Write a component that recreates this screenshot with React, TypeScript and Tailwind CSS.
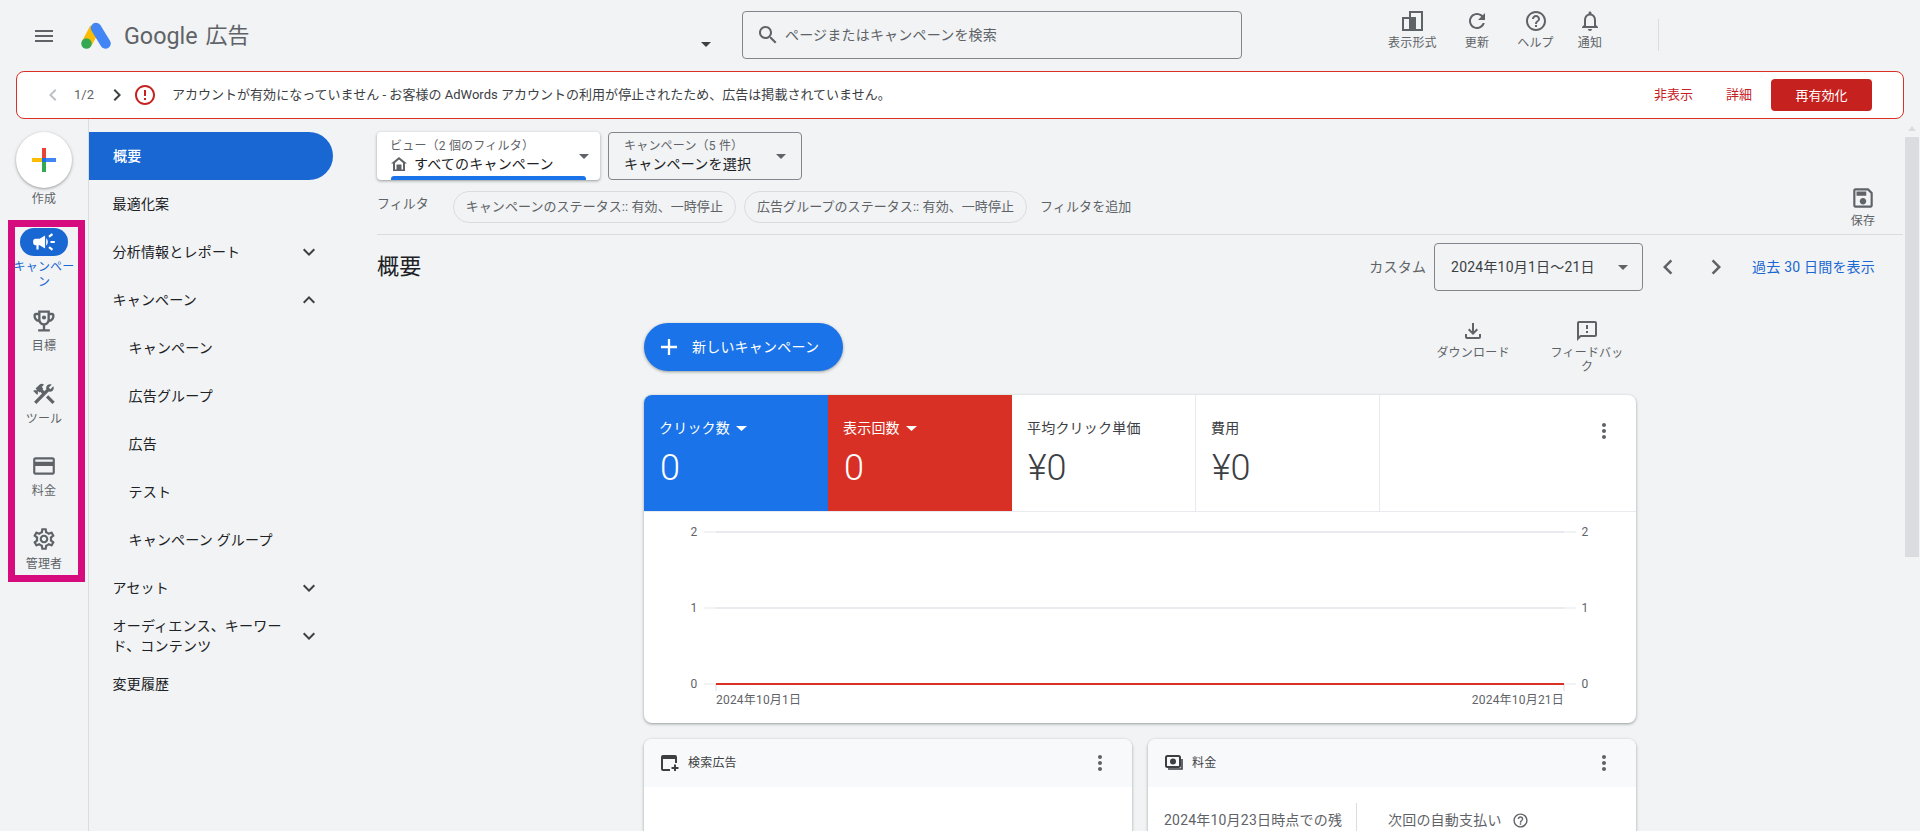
import React from "react";

const P: Record<string, string> = {
  menu: "M3 18h18v-2H3v2zm0-5h18v-2H3v2zm0-7v2h18V6H3z",
  search: "M15.5 14h-.79l-.28-.27C15.41 12.59 16 11.11 16 9.5 16 5.91 13.09 3 9.5 3S3 5.91 3 9.5 5.91 16 9.5 16c1.61 0 3.09-.59 4.23-1.57l.27.28v.79l5 4.99L20.49 19l-4.99-5zm-6 0C7.01 14 5 11.99 5 9.5S7.01 5 9.5 5 14 7.01 14 9.5 11.99 14 9.5 14z",
  refresh: "M17.65 6.35C16.2 4.9 14.21 4 12 4c-4.42 0-7.99 3.58-7.99 8s3.57 8 7.99 8c3.73 0 6.84-2.55 7.73-6h-2.08c-.82 2.33-3.04 4-5.65 4-3.31 0-6-2.69-6-6s2.69-6 6-6c1.66 0 3.14.69 4.22 1.78L13 11h7V4l-2.35 2.35z",
  help: "M11 18h2v-2h-2v2zm1-16C6.48 2 2 6.48 2 12s4.48 10 10 10 10-4.48 10-10S17.52 2 12 2zm0 18c-4.41 0-8-3.59-8-8s3.59-8 8-8 8 3.59 8 8-3.59 8-8 8zm0-14c-2.21 0-4 1.79-4 4h2c0-1.1.9-2 2-2s2 .9 2 2c0 2-3 1.75-3 5h2c0-2.25 3-2.5 3-5 0-2.21-1.79-4-4-4z",
  bell: "M12 22c1.1 0 2-.9 2-2h-4c0 1.1.9 2 2 2zm6-6v-5c0-3.07-1.63-5.64-4.5-6.32V4c0-.83-.67-1.5-1.5-1.5s-1.5.67-1.5 1.5v.68C7.64 5.36 6 7.92 6 11v5l-2 2v1h16v-1l-2-2zm-2 1H8v-6c0-2.48 1.51-4.5 4-4.5s4 2.02 4 4.5v6z",
  error: "M11 15h2v2h-2zm0-8h2v6h-2zm.99-5C6.47 2 2 6.48 2 12s4.47 10 9.99 10C17.52 22 22 17.52 22 12S17.52 2 11.99 2zM12 20c-4.42 0-8-3.58-8-8s3.58-8 8-8 8 3.58 8 8-3.58 8-8 8z",
  left: "M15.41 7.41L14 6l-6 6 6 6 1.41-1.41L10.83 12z",
  right: "M10 6L8.59 7.41 13.17 12l-4.58 4.59L10 18l6-6z",
  down: "M16.59 8.59L12 13.17 7.41 8.59 6 10l6 6 6-6z",
  up: "M12 8l-6 6 1.41 1.41L12 10.83l4.59 4.58L18 14z",
  campaign: "M18 11v2h4v-2h-4zm-2 6.61c.96.71 2.21 1.65 3.2 2.39.4-.53.8-1.07 1.2-1.6-.99-.74-2.24-1.68-3.2-2.4-.4.54-.8 1.08-1.2 1.61zM20.4 5.6c-.4-.53-.8-1.07-1.2-1.6-.99.74-2.24 1.68-3.2 2.4.4.53.8 1.07 1.2 1.6.96-.72 2.21-1.65 3.2-2.4zM4 9c-1.1 0-2 .9-2 2v2c0 1.1.9 2 2 2h1v4h2v-4h1l5 3V6L8 9H4zm11.5 3c0-1.33-.58-2.53-1.5-3.35v6.69c.92-.81 1.5-2.01 1.5-3.34z",
  trophy: "M19 5h-2V3H7v2H5c-1.1 0-2 .9-2 2v1c0 2.55 1.92 4.63 4.39 4.94.63 1.5 1.98 2.63 3.61 2.96V19H7v2h10v-2h-4v-3.1c1.63-.33 2.98-1.46 3.61-2.96C19.08 12.63 21 10.55 21 8V7c0-1.1-.9-2-2-2zM5 8V7h2v3.82C5.84 10.4 5 9.3 5 8zm7 6c-1.65 0-3-1.35-3-3V5h6v6c0 1.65-1.35 3-3 3zm7-6c0 1.3-.84 2.4-2 2.82V7h2v1zM12 7.2a1.8 1.8 0 1 0 0 3.6 1.8 1.8 0 0 0 0-3.6z",
  tools: "M13.783 15.172l2.121-2.121 5.996 5.996-2.121 2.121zM17.5 10c1.93 0 3.5-1.57 3.5-3.5 0-.58-.16-1.12-.41-1.6l-2.7 2.7-1.49-1.49 2.7-2.7c-.48-.25-1.02-.41-1.6-.41C15.57 3 14 4.57 14 6.5c0 .41.08.8.21 1.16l-1.85 1.85-1.78-1.78.71-.71-1.41-1.41L12 3.49c-1.17-1.17-3.07-1.17-4.24 0L4.22 7.03l1.41 1.41H2.81l-.71.71 3.54 3.54.71-.71V9.15l1.41 1.41.71-.71 1.78 1.78-7.41 7.41 2.12 2.12L16.34 9.79c.36.13.75.21 1.16.21z",
  card: "M20 4H4c-1.11 0-1.99.89-1.99 2L2 18c0 1.11.89 2 2 2h16c1.11 0 2-.89 2-2V6c0-1.11-.89-2-2-2zm0 14H4v-6h16v6zm0-10H4V6h16v2z",
  gear: "M19.43 12.98c.04-.32.07-.64.07-.98 0-.34-.03-.66-.07-.98l2.11-1.65c.19-.15.24-.42.12-.64l-2-3.46c-.09-.16-.26-.25-.44-.25-.06 0-.12.01-.17.03l-2.49 1c-.52-.4-1.08-.73-1.69-.98l-.38-2.65C14.46 2.18 14.25 2 14 2h-4c-.25 0-.46.18-.49.42l-.38 2.65c-.61.25-1.17.59-1.69.98l-2.49-1c-.06-.02-.12-.03-.18-.03-.17 0-.34.09-.43.25l-2 3.46c-.13.22-.07.49.12.64l2.11 1.65c-.04.32-.07.65-.07.98 0 .33.03.66.07.98l-2.11 1.65c-.19.15-.24.42-.12.64l2 3.46c.09.16.26.25.44.25.06 0 .12-.01.17-.03l2.49-1c.52.4 1.08.73 1.69.98l.38 2.65c.03.24.24.42.49.42h4c.25 0 .46-.18.49-.42l.38-2.65c.61-.25 1.17-.59 1.69-.98l2.49 1c.06.02.12.03.18.03.17 0 .34-.09.43-.25l2-3.46c.12-.22.07-.49-.12-.64l-2.11-1.65zm-1.98-1.71c.04.31.05.52.05.73 0 .21-.02.43-.05.73l-.14 1.13.89.7 1.08.84-.7 1.21-1.27-.51-1.04-.42-.9.68c-.43.32-.84.56-1.25.73l-1.06.43-.16 1.13-.2 1.35h-1.4l-.19-1.35-.16-1.13-1.06-.43c-.43-.18-.83-.41-1.23-.71l-.91-.7-1.06.43-1.27.51-.7-1.21 1.08-.84.89-.7-.14-1.13c-.03-.31-.05-.54-.05-.74s.02-.43.05-.73l.14-1.13-.89-.7-1.08-.84.7-1.21 1.27.51 1.04.42.9-.68c.43-.32.84-.56 1.25-.73l1.06-.43.16-1.13.2-1.35h1.39l.19 1.35.16 1.13 1.06.43c.43.18.83.41 1.23.71l.91.7 1.06-.43 1.27-.51.7 1.21-1.07.85-.89.7.14 1.13zM12 8c-2.21 0-4 1.79-4 4s1.79 4 4 4 4-1.79 4-4-1.79-4-4-4zm0 6c-1.1 0-2-.9-2-2s.9-2 2-2 2 .9 2 2-.9 2-2 2z",
  save: "M17 3H5c-1.11 0-2 .9-2 2v14c0 1.1.89 2 2 2h14c1.1 0 2-.9 2-2V7l-4-4zm2 16H5V5h11.17L19 7.83V19zm-7-7c-1.66 0-3 1.34-3 3s1.34 3 3 3 3-1.34 3-3-1.34-3-3-3zM6 6h9v4H6z",
  download: "M18 15v3H6v-3H4v3c0 1.1.9 2 2 2h12c1.1 0 2-.9 2-2v-3h-2zm-1-4l-1.41-1.41L13 12.17V4h-2v8.17L8.41 9.59 7 11l5 5 5-5z",
  feedback: "M20 2H4c-1.1 0-1.99.9-1.99 2L2 22l4-4h14c1.1 0 2-.9 2-2V4c0-1.1-.9-2-2-2zm0 14H5.17L4 17.17V4h16v12zm-9-4h2v2h-2zm0-6h2v4h-2z",
  more: "M12 8c1.1 0 2-.9 2-2s-.9-2-2-2-2 .9-2 2 .9 2 2 2zm0 2c-1.1 0-2 .9-2 2s.9 2 2 2 2-.9 2-2-.9-2-2-2zm0 6c-1.1 0-2 .9-2 2s.9 2 2 2 2-.9 2-2-.9-2-2-2z",
};

function I({ n, c = "text-[#5f6368]", s = 24 }: { n: string; c?: string; s?: number }) {
  return (
    <svg width={s} height={s} viewBox="0 0 24 24" className={`shrink-0 fill-current ${c}`}>
      <path d={P[n]} />
    </svg>
  );
}

function Tri({ c = "fill-[#5f6368]", w = 10, h = 5 }: { c?: string; w?: number; h?: number }) {
  return (
    <svg width={w} height={h} viewBox="0 0 10 5" className={`shrink-0 ${c}`} preserveAspectRatio="none">
      <path d="M0 0h10L5 5z" />
    </svg>
  );
}

function TopAction({ icon, custom, label, cls = "" }: { icon?: string; custom?: React.ReactNode; label: string; cls?: string }) {
  return (
    <div className={`flex flex-col items-center ${cls}`}>
      <div className="h-[24px] flex items-center justify-center">{custom ?? <I n={icon as string} />}</div>
      <div className="mt-[2px] text-[12px] leading-[16px] text-[#5f6368] whitespace-nowrap">{label}</div>
    </div>
  );
}

function RailItem({ icon, label, cls }: { icon: string; label: string; cls: string }) {
  return (
    <div className={`flex flex-col items-center ${cls}`}>
      <div className="h-[24px] flex items-center justify-center">
        <I n={icon} s={icon === "trophy" ? 28 : 26} />
      </div>
      <div className="mt-[5px] text-[12px] leading-[16px] text-[#5f6368] whitespace-nowrap">{label}</div>
    </div>
  );
}

function NavItem({ label, chev, child, two }: { label: string; chev?: "up" | "down"; child?: boolean; two?: boolean }) {
  return (
    <div className={`h-[48px] flex items-center pr-[12px] text-[14px] leading-[20px] text-[#202124] ${child ? "pl-[39.5px]" : "pl-[23.5px]"}`}>
      <div className={two ? "w-[178px]" : "whitespace-nowrap"}>{label}</div>
      {chev && (
        <div className="ml-auto">
          <I n={chev} c="text-[#3c4043]" />
        </div>
      )}
    </div>
  );
}

function Metric({ label, value, tone, tri }: { label: string; value: string; tone: string; tri?: boolean }) {
  return (
    <div className={`w-[184px] h-[116px] pl-[15px] pt-[23px] ${tone}`}>
      <div className="flex items-center gap-[6px] text-[14px] leading-[20px] whitespace-nowrap">
        {label}
        {tri && <Tri c="fill-white" w={11} h={5} />}
      </div>
      <div className="ml-[1px] mt-[10px] text-[36px] leading-[40px] font-light tracking-normal">{value}</div>
    </div>
  );
}

function Chart() {
  const t = "fill-[#5f6368] text-[12px]";
  return (
    <svg width={992} height={212} viewBox="0 0 992 212" className="block">
      {[20, 96, 172].map((y) => (
        <g key={y}>
          <line x1={60} x2={932} y1={y} y2={y} stroke="#f1f3f4" strokeWidth={2} />
          <line x1={72} x2={920} y1={y} y2={y} stroke="#e8eaed" strokeWidth={2} />
        </g>
      ))}
      <line x1={72} x2={72} y1={172} y2={179} stroke="#dadce0" />
      <line x1={920} x2={920} y1={172} y2={179} stroke="#dadce0" />
      <line x1={72} x2={920} y1={172} y2={172} stroke="#d93025" strokeWidth={2} />
      {[
        ["2", 20],
        ["1", 96],
        ["0", 172],
      ].map(([v, y]) => (
        <g key={v as string}>
          <text x={50} y={(y as number) + 4} textAnchor="middle" className={t}>{v}</text>
          <text x={941} y={(y as number) + 4} textAnchor="middle" className={t}>{v}</text>
        </g>
      ))}
      <text x={72} y={192} className={t}>2024年10月1日</text>
      <text x={920} y={192} textAnchor="end" className={t}>2024年10月21日</text>
    </svg>
  );
}

const cardShadow = "shadow-[0_1px_2px_rgba(60,64,67,0.3),0_1px_3px_1px_rgba(60,64,67,0.15)]";

export default function App() {
  return (
    <div className="h-[831px] w-[1920px] overflow-hidden flex flex-col bg-[#f1f3f4] tracking-[0.2px] font-['Roboto','Noto_Sans_CJK_JP',sans-serif] text-[#3c4043]">
      {/* Header */}
      <header className="h-[71px] shrink-0 flex items-start">
        <div className="w-[701px] shrink-0 flex items-center h-[71px] pl-[32px] tracking-normal">
          <I n="menu" />
          <svg width={30} height={27} viewBox="0 0 30 27" className="ml-[25px]">
            <line x1={14} y1={6} x2={6} y2={21} stroke="#fbbc04" strokeWidth={10.5} />
            <line x1={15} y1={6} x2={24.5} y2={21.5} stroke="#4285f4" strokeWidth={10.5} strokeLinecap="round" />
            <circle cx={5.5} cy={21.5} r={5.25} fill="#34a853" />
          </svg>
          <span className="ml-[13px] text-[23.3px] leading-[32px] text-[#5f6368]">Google</span>
          <span className="ml-[8px] text-[22px] leading-[32px] text-[#5f6368]">広告</span>
        </div>
        <div className="mt-[42px]">
          <Tri c="fill-[#3c4043]" />
        </div>
        <div className="ml-[31px] mt-[11px] w-[500px] h-[48px] shrink-0 border border-[#80868b] rounded-[4px] flex items-center pl-[13px]">
          <I n="search" s={24} />
          <span className="ml-[5px] text-[14px] leading-[20px] text-[#5f6368]">ページまたはキャンペーンを検索</span>
        </div>
        <div className="ml-[146px] mt-[9px] flex">
          <TopAction
            label="表示形式"
            custom={
              <svg width={21} height={20} viewBox="0 0 21 20" className="fill-[#5f6368]">
                <path d="M7 0h14v20H0V6h7V0zm2 2v4h-2v12h12V2H9zM2 8v10h5V8H2z" />
                <path d="M7 6h7v14H7z" />
              </svg>
            }
          />
          <TopAction icon="refresh" label="更新" cls="ml-[28px]" />
          <TopAction icon="help" label="ヘルプ" cls="ml-[28px]" />
          <TopAction icon="bell" label="通知" cls="ml-[24px]" />
        </div>
        <div className="ml-[56px] mt-[19px] w-px h-[32px] bg-[#dadce0]" />
      </header>

      {/* Banner */}
      <div className="mx-[16px] h-[48px] shrink-0 bg-white border border-[#d93025] rounded-[8px] flex items-center pl-[24px] pr-[31px] tracking-normal">
        <I n="left" c="text-[#bdc1c6]" />
        <span className="ml-[9px] text-[13px] leading-[20px] text-[#5f6368]">1/2</span>
        <div className="ml-[11px]"><I n="right" c="text-[#3c4043]" /></div>
        <div className="ml-[4px]"><I n="error" c="text-[#c5221f]" /></div>
        <span className="ml-[15px] text-[13px] leading-[20px] text-[#3c4043] whitespace-nowrap tracking-[0.02px]">
          アカウントが有効になっていません - お客様の AdWords アカウントの利用が停止されたため、広告は掲載されていません。
        </span>
        <span className="ml-auto text-[13px] leading-[20px] text-[#c5221f]">非表示</span>
        <span className="ml-[33px] text-[13px] leading-[20px] text-[#c5221f]">詳細</span>
        <button className="ml-[19px] w-[101px] h-[32px] bg-[#c5221f] rounded-[4px] text-white text-[13px] leading-[20px] pt-[1px]">再有効化</button>
      </div>

      {/* Body */}
      <div className="flex-1 min-h-0 flex">
        {/* Rail */}
        <aside className="relative w-[89px] shrink-0 border-r border-[#dadce0] flex flex-col items-center pt-[13px]">
          <div className={`w-[56px] h-[56px] rounded-full bg-white flex items-center justify-center ${cardShadow}`}>
            <svg width={24} height={24} viewBox="0 0 24 24">
              <rect x={10} y={0} width={4} height={12} fill="#ea4335" />
              <rect x={10} y={12} width={4} height={12} fill="#34a853" />
              <rect x={0} y={10} width={10} height={4} fill="#fbbc04" />
              <rect x={14} y={10} width={10} height={4} fill="#4285f4" />
              <rect x={10} y={10} width={4} height={4} fill="#1a73e8" />
            </svg>
          </div>
          <div className="mt-[3px] text-[12px] leading-[16px] text-[#5f6368]">作成</div>
          <div className="mt-[21px] w-[48px] h-[28px] rounded-full bg-[#1967d2] flex items-center justify-center">
            <I n="campaign" c="text-white" s={26} />
          </div>
          <div className="mt-[4px] w-[64px] text-center text-[12px] leading-[15px] text-[#1967d2]">キャンペーン</div>
          <RailItem icon="trophy" label="目標" cls="mt-[19px]" />
          <RailItem icon="tools" label="ツール" cls="mt-[28px]" />
          <RailItem icon="card" label="料金" cls="mt-[27px]" />
          <RailItem icon="gear" label="管理者" cls="mt-[28px]" />
          <div className="absolute left-[8px] top-[101px] w-[77px] h-[362px] border-[7px] border-[#d60b7e]" />
        </aside>

        {/* Nav */}
        <nav className="w-[244px] shrink-0 pt-[13px]">
          <div className="h-[48px] bg-[#1967d2] rounded-r-full flex items-center pl-[24px] text-[14px] leading-[20px] text-white font-medium">概要</div>
          <NavItem label="最適化案" />
          <NavItem label="分析情報とレポート" chev="down" />
          <NavItem label="キャンペーン" chev="up" />
          <NavItem label="キャンペーン" child />
          <NavItem label="広告グループ" child />
          <NavItem label="広告" child />
          <NavItem label="テスト" child />
          <NavItem label="キャンペーン グループ" child />
          <NavItem label="アセット" chev="down" />
          <NavItem label="オーディエンス、キーワード、コンテンツ" chev="down" two />
          <NavItem label="変更履歴" />
        </nav>

        {/* Main */}
        <main className="flex-1 min-w-0 overflow-hidden pl-[44px] pt-[13px]">
          <div className="flex gap-[8px]">
            <div className={`w-[223px] h-[48px] bg-white rounded-[4px] flex items-center ${cardShadow}`}>
              <div className="flex-1 min-w-0 pl-[13px] pt-[6px] self-start">
                <div className="text-[12px] leading-[16px] text-[#5f6368] whitespace-nowrap">ビュー（2 個のフィルタ）</div>
                <div className="flex items-center text-[14px] leading-[20px] text-[#202124] whitespace-nowrap">
                  <svg width={16} height={14} viewBox="0 0 16 14" className="ml-[1px] mr-[7px] shrink-0 fill-[#5f6368]">
                    <path fillRule="evenodd" d="M8 0L0 6.5h2V14h12V6.5h2L8 0zM8 2.5l4 3.6v6.4H4V6.1l4-3.6z" />
                    <path d="M5.5 7.5h5V14h-5z" />
                  </svg>
                  すべてのキャンペーン
                </div>
                <div className="mt-[2px] ml-[1px] w-[195px] h-[4px] bg-[#1a73e8] rounded-t-[3px]" />
              </div>
              <div className="mr-[11px]"><Tri /></div>
            </div>
            <div className="w-[194px] h-[48px] border border-[#80868b] rounded-[4px] flex items-center">
              <div className="flex-1 pl-[15px] self-start pt-[5px]">
                <div className="text-[12px] leading-[16px] text-[#5f6368]">キャンペーン（5 件）</div>
                <div className="text-[14px] leading-[20px] text-[#202124]">キャンペーンを選択</div>
              </div>
              <div className="mr-[15px]"><Tri /></div>
            </div>
          </div>

          <div className="h-[55px] border-b border-[#dadce0] flex items-center pr-[27px]">
            <span className="text-[13px] leading-[20px] tracking-normal text-[#5f6368] -mt-[7px]">フィルタ</span>
            <div className="ml-[24px] h-[32px] px-[12px] rounded-full border border-[#dadce0] flex items-center text-[13px] tracking-[0.06px] text-[#5f6368] whitespace-nowrap">キャンペーンのステータス:: 有効、一時停止</div>
            <div className="ml-[8px] h-[32px] px-[12px] rounded-full border border-[#dadce0] flex items-center text-[13px] tracking-[0.06px] text-[#5f6368] whitespace-nowrap">広告グループのステータス:: 有効、一時停止</div>
            <span className="ml-[13px] text-[13px] leading-[20px] tracking-[0.1px] text-[#5f6368]">フィルタを追加</span>
            <div className="ml-auto flex flex-col items-center">
              <I n="save" s={26} />
              <span className="mt-[2px] text-[12px] leading-[16px] text-[#5f6368]">保存</span>
            </div>
          </div>

          <div className="mt-[8px] h-[48px] flex items-center pr-[28px]">
            <h1 className="text-[22px] leading-[28px] font-normal text-[#202124]">概要</h1>
            <span className="ml-auto text-[14px] text-[#5f6368]">カスタム</span>
            <div className="ml-[8px] w-[209px] h-[48px] border border-[#80868b] rounded-[4px] flex items-center pl-[16px] pr-[14px] text-[14px] text-[#3c4043] whitespace-nowrap">
              2024年10月1日～21日
              <div className="ml-auto"><Tri /></div>
            </div>
            <div className="ml-[10px]"><I n="left" s={30} /></div>
            <div className="ml-[18px]"><I n="right" s={30} /></div>
            <span className="ml-[21px] text-[14px] text-[#1967d2] whitespace-nowrap">過去 30 日間を表示</span>
          </div>

          <div className="ml-[267px] w-[992px] mt-[32px]">
            <div className="h-[72px] flex items-start">
              <button className={`w-[199px] h-[48px] rounded-full bg-[#1a73e8] flex items-center pl-[13px] text-white text-[14px] leading-[20px] ${cardShadow}`}>
                <svg width={24} height={24} viewBox="0 0 24 24" className="fill-white"><path d="M19 13h-6v6h-2v-6H5v-2h6V5h2v6h6v2z" transform="translate(12 12) scale(1.15) translate(-12 -12)" /></svg>
                <span className="ml-[11px]">新しいキャンペーン</span>
              </button>
              <div className="ml-auto -mt-[4px] flex gap-[34px] pr-[9px]">
                <div className="w-[80px] flex flex-col items-center text-center">
                  <I n="download" />
                  <div className="mt-[3px] text-[12px] leading-[14px] text-[#5f6368]">ダウンロード</div>
                </div>
                <div className="w-[80px] flex flex-col items-center text-center">
                  <I n="feedback" />
                  <div className="mt-[3px] w-[76px] text-[12px] leading-[14px] text-[#5f6368]">フィードバック</div>
                </div>
              </div>
            </div>

            <section className={`w-[992px] h-[328px] bg-white rounded-[8px] overflow-hidden ${cardShadow}`}>
              <div className="flex border-b border-[#e8eaed]">
                <Metric label="クリック数" value="0" tone="bg-[#1a73e8] text-white" tri />
                <Metric label="表示回数" value="0" tone="bg-[#d93025] text-white" tri />
                <Metric label="平均クリック単価" value="¥0" tone="border-r border-[#e8eaed] text-[#3c4043]" />
                <Metric label="費用" value="¥0" tone="border-r border-[#e8eaed] text-[#3c4043]" />
                <div className="ml-auto pr-[20px] pt-[24px]"><I n="more" /></div>
              </div>
              <Chart />
            </section>

            <div className="mt-[16px] flex gap-[16px]">
              <section className={`flex-1 h-[200px] bg-white rounded-t-[8px] overflow-hidden ${cardShadow}`}>
                <div className="h-[48px] bg-[#f8f9fa] flex items-center pl-[17px] pr-[20px] text-[12px] text-[#3c4043]">
                  <svg width={18} height={16} viewBox="0 0 18 16" className="fill-[#3c4043]">
                    <path d="M2 0h12a2 2 0 0 1 2 2v6h-2V4H2v10h7v2H2a2 2 0 0 1-2-2V2a2 2 0 0 1 2-2z" />
                    <path d="M13 9.5h2V12h2.5v2H15v2h-2v-2h-2.5v-2H13z" />
                  </svg>
                  <span className="ml-[9px]">検索広告</span>
                  <div className="ml-auto"><I n="more" /></div>
                </div>
              </section>
              <section className={`flex-1 h-[200px] bg-white rounded-t-[8px] overflow-hidden ${cardShadow}`}>
                <div className="h-[48px] bg-[#f8f9fa] flex items-center pl-[17px] pr-[20px] text-[12px] text-[#3c4043]">
                  <svg width={18} height={16} viewBox="0 0 18 16" fill="none">
                    <rect x={1} y={1} width={14} height={11} rx={1.5} stroke="#3c4043" strokeWidth={2} />
                    <circle cx={8} cy={6.5} r={3} fill="#3c4043" />
                    <path d="M17 4v10H3" stroke="#3c4043" strokeWidth={1.6} />
                  </svg>
                  <span className="ml-[9px]">料金</span>
                  <div className="ml-auto"><I n="more" /></div>
                </div>
                <div className="flex pt-[16px] text-[14px] leading-[20px] text-[#5f6368]">
                  <div className="w-[209px] pl-[16px] pt-[7px] h-[100px] border-r border-[#dadce0] whitespace-nowrap">2024年10月23日時点での残</div>
                  <div className="pl-[31px] pt-[7px] flex items-start gap-[10px]">
                    次回の自動支払い
                    <div className="mt-[2px]"><I n="help" s={17} /></div>
                  </div>
                </div>
              </section>
            </div>
          </div>
        </main>

        {/* Scrollbar */}
        <div className="w-[17px] shrink-0 pl-[2px] pt-[7px]">
          <div className="w-[14px] flex justify-center"><Tri c="fill-[#dadce0] rotate-180" w={8} h={5} /></div>
          <div className="mt-[6px] w-[14px] h-[420px] bg-[#dadce0]" />
        </div>
      </div>
    </div>
  );
}
